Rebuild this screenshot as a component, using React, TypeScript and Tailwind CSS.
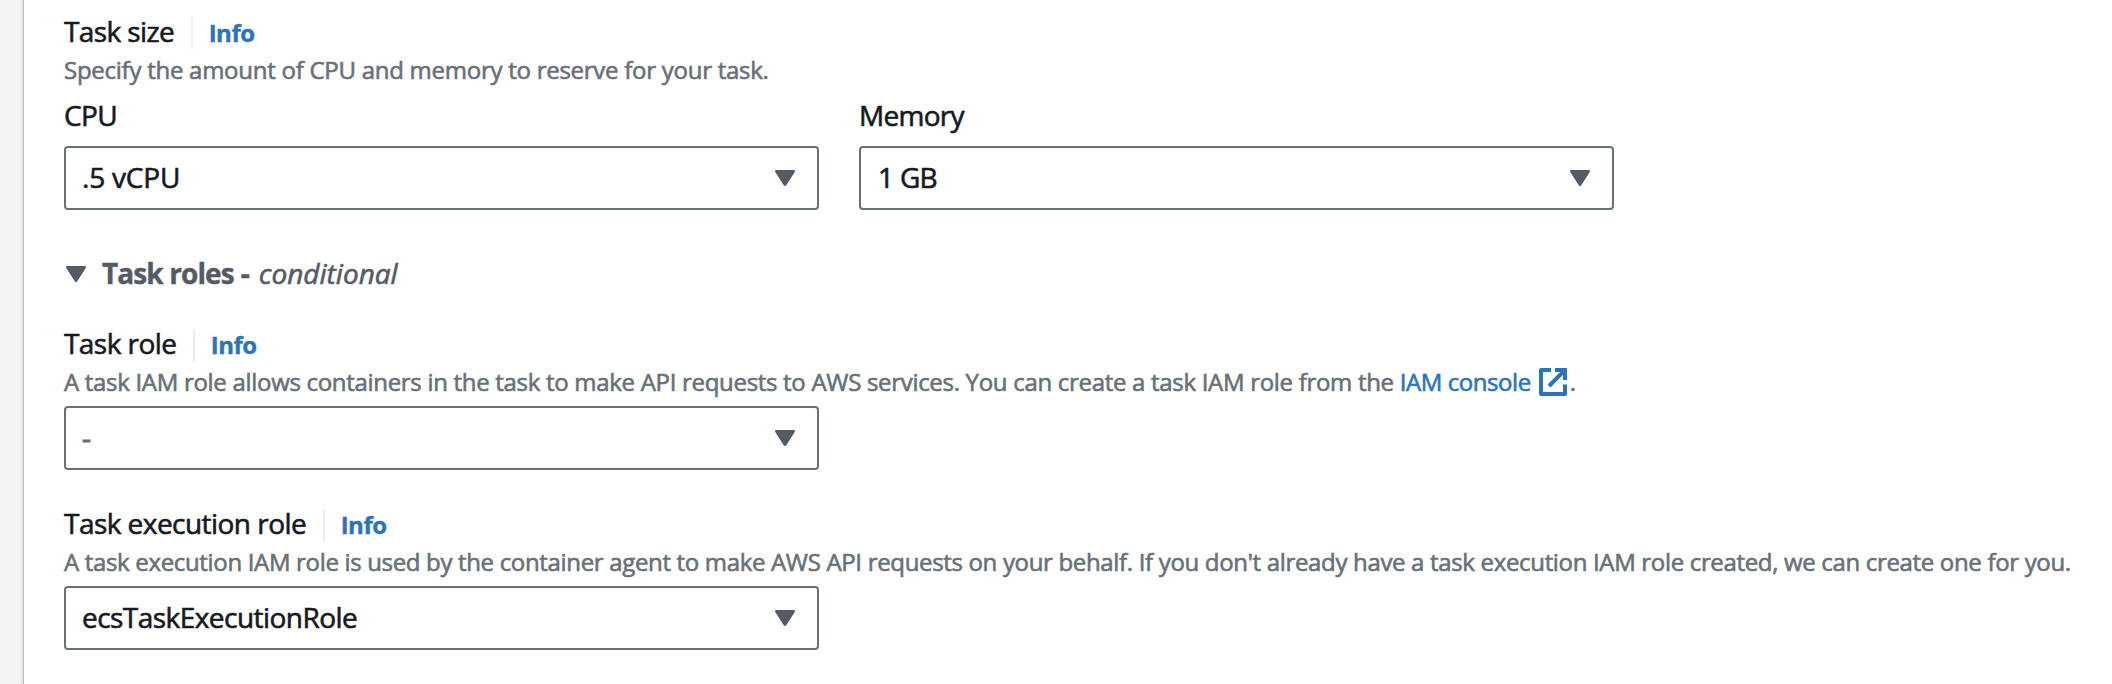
import type { ReactNode } from "react";

function Caret() {
  return (
    <svg width="20" height="16" viewBox="0 0 20 16" className="shrink-0 fill-[#545b64]">
      <path d="M1.300 0h17.400c1.200 0 1.600 1.300.9 2.300L11.300 15.200c-.6.900-2 .9-2.600 0L.4 2.300C-.3 1.300.1 0 1.300 0z" />
    </svg>
  );
}

function ExternalIcon() {
  return (
    <svg width="28" height="28" viewBox="0 0 28 28" fill="none" stroke="#2e73b8" strokeWidth="4" className="ml-2 shrink-0">
      <path d="M12 2H2v24h24V16.500" strokeLinejoin="round" />
      <path d="M16 2h10v10M26 2L10 18" />
    </svg>
  );
}

function FieldHeader({ children }: { children: ReactNode }) {
  return (
    <div className="flex h-10 items-center whitespace-nowrap">
      {children}
      <span className="mt-1 ml-[17px] h-8 w-0.5 bg-[#eaeded]" />
      <a className="mt-1 ml-[15.5px] text-2xl leading-8 font-bold tracking-[-0.5px] text-[#2e73b8] [-webkit-text-stroke-width:0.4px]">Info</a>
    </div>
  );
}

function Select({ children }: { children: ReactNode }) {
  return (
    <div className="flex h-16 w-[755px] items-center justify-between rounded-[4px] border-2 border-[#687078] pr-[22px] pl-4">
      <span className="pb-0.5 leading-10">{children}</span>
      <Caret />
    </div>
  );
}

export default function App() {
  return (
    <div className="flex h-[684px] w-[2112px] overflow-hidden bg-[#f2f3f3] font-['Open_Sans',sans-serif] text-[28px] text-[#16191f] [-webkit-text-stroke-width:0.6px]">
      <main className="ml-6 flex-1 bg-white pt-[11px] pl-10 shadow-[0_0_0_1px_#b9bfbf,-1px_0_2px_1px_#d5d9d9]">
        <FieldHeader>
          <span className="tracking-[-0.6px]">Task size</span>
        </FieldHeader>
        <p className="h-[38px] text-2xl leading-[38px] tracking-[-0.26px] whitespace-nowrap text-[#687078]">
          Specify the amount of CPU and memory to reserve for your task.
        </p>
        <div className="flex gap-10">
          <div>
            <div className="mb-[5px] h-[52px] leading-[52px] tracking-[-0.6px]">CPU</div>
            <Select>
              <span className="tracking-[-0.2px]">.5 vCPU</span>
            </Select>
          </div>
          <div>
            <div className="mb-[5px] h-[52px] leading-[52px] tracking-[-0.7px]">Memory</div>
            <Select>
              <span className="pl-px tracking-[-0.7px]">1 GB</span>
            </Select>
          </div>
        </div>

        <div className="mt-[43px] flex h-10 items-center pl-0.5 leading-10 whitespace-pre text-[#545b64]">
          <div className="mt-0.5">
            <Caret />
          </div>
          <span className="ml-4 font-bold tracking-[-0.9px] [-webkit-text-stroke-width:0.4px]">Task roles</span>
          <span className="ml-[7px] font-bold [-webkit-text-stroke-width:0.6px]">-</span>
          <span className="ml-[9px] italic">conditional</span>
        </div>

        <div className="mt-[30px]">
          <FieldHeader>
            <span className="tracking-[-0.56px]">Task role</span>
          </FieldHeader>
          <div className="mb-[5px] flex h-[38px] items-center text-2xl leading-[38px] whitespace-nowrap text-[#687078]">
            <span className="tracking-[-0.303px]">
              A task IAM role allows containers in the task to make API requests to AWS services. You can create a task IAM role from the
            </span>
            <a className="ml-1.5 tracking-[-0.43px] text-[#2e73b8]">IAM console</a>
            <ExternalIcon />
            <span className="ml-[3px]">.</span>
          </div>
          <Select>
            <span className="text-[#687078] [-webkit-text-stroke-width:1px]">-</span>
          </Select>
        </div>

        <div className="mt-[33px]">
          <FieldHeader>
            <span className="tracking-[-0.54px]">Task execution role</span>
          </FieldHeader>
          <p className="mb-[5px] h-[38px] text-2xl leading-[38px] tracking-[-0.331px] whitespace-nowrap text-[#687078]">
            A task execution IAM role is used by the container agent to make AWS API requests on your behalf. If you don't already have a task execution IAM role created, we can create one for you.
          </p>
          <Select>
            <span className="tracking-[-0.54px]">ecsTaskExecutionRole</span>
          </Select>
        </div>
      </main>
    </div>
  );
}
